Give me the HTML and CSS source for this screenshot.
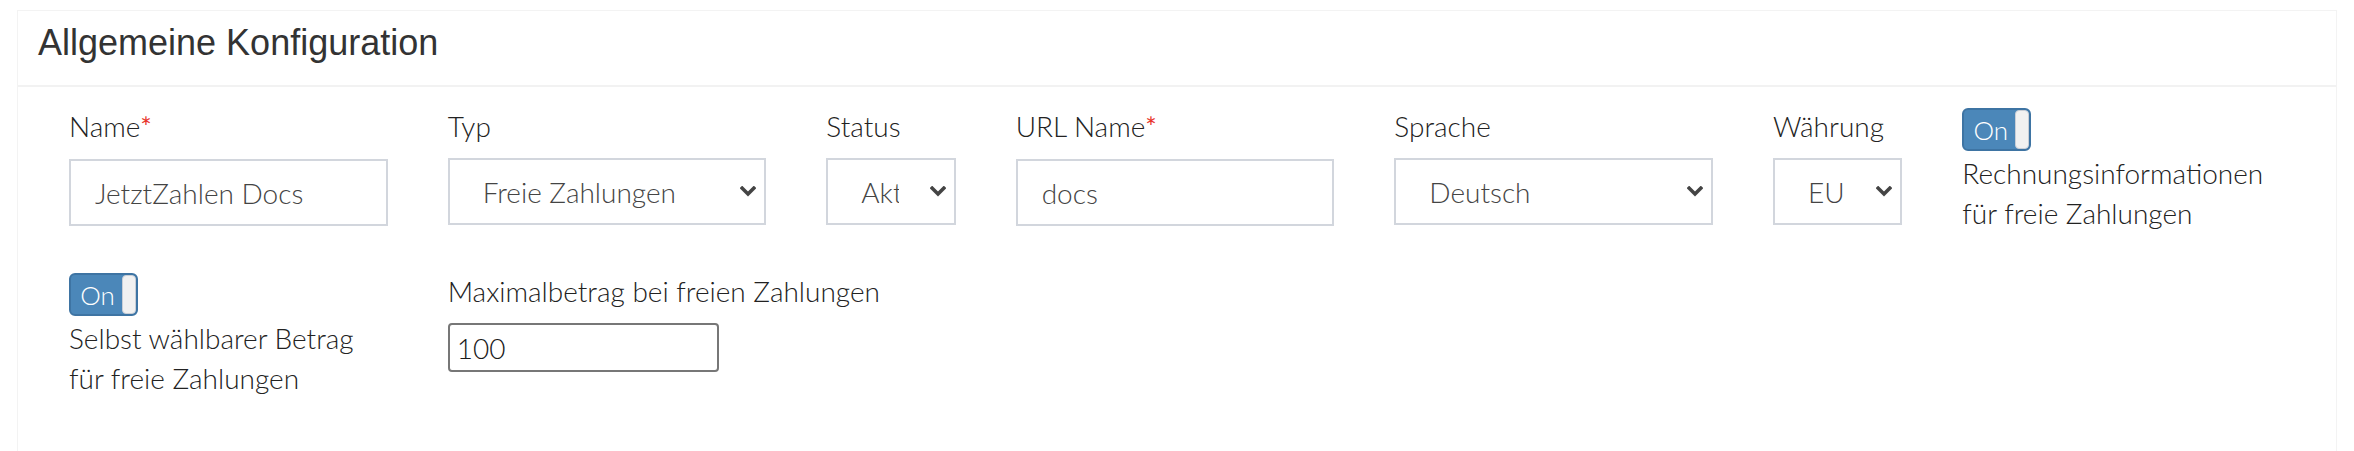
FILE: index.html
```html
<!DOCTYPE html>
<html lang="de">
<head>
<meta charset="utf-8">
<title>Allgemeine Konfiguration</title>
<link rel="stylesheet" href="styles.css">
</head>
<body>
<div class="page">
  <section class="panel">
    <header class="panel-heading">
      <h3 class="panel-title">Allgemeine Konfiguration</h3>
    </header>
    <div class="panel-body">
      <div class="form-row">
        <div class="field span2">
          <label class="field-label">Name<span class="req">*</span></label>
          <input class="control" type="text" value="JetztZahlen Docs">
        </div>
        <div class="field span2">
          <label class="field-label">Typ</label>
          <div class="select-wrap">
            <select class="control select"><option>Freie Zahlungen</option></select>
            <svg class="chevron" viewBox="0 0 16 11" width="16" height="11"><polyline points="2.2,2.2 8,8 13.8,2.2" fill="none" stroke="#444" stroke-width="3.6" stroke-linecap="square"/></svg>
          </div>
        </div>
        <div class="field span1">
          <label class="field-label">Status</label>
          <div class="select-wrap">
            <select class="control select"><option>Aktiv</option></select>
            <svg class="chevron" viewBox="0 0 16 11" width="16" height="11"><polyline points="2.2,2.2 8,8 13.8,2.2" fill="none" stroke="#444" stroke-width="3.6" stroke-linecap="square"/></svg>
          </div>
        </div>
        <div class="field span2">
          <label class="field-label">URL Name<span class="req">*</span></label>
          <input class="control" type="text" value="docs">
        </div>
        <div class="field span2">
          <label class="field-label">Sprache</label>
          <div class="select-wrap">
            <select class="control select"><option>Deutsch</option></select>
            <svg class="chevron" viewBox="0 0 16 11" width="16" height="11"><polyline points="2.2,2.2 8,8 13.8,2.2" fill="none" stroke="#444" stroke-width="3.6" stroke-linecap="square"/></svg>
          </div>
        </div>
        <div class="field span1">
          <label class="field-label">Währung</label>
          <div class="select-wrap">
            <select class="control select"><option>EUR</option></select>
            <svg class="chevron" viewBox="0 0 16 11" width="16" height="11"><polyline points="2.2,2.2 8,8 13.8,2.2" fill="none" stroke="#444" stroke-width="3.6" stroke-linecap="square"/></svg>
          </div>
        </div>
        <div class="field span2">
          <span class="toggle"><span class="toggle-on">On</span><span class="toggle-handle"></span></span>
          <span class="toggle-label">Rechnungsinformationen<br>für freie Zahlungen</span>
        </div>
      </div>
      <div class="form-row">
        <div class="field span2">
          <span class="toggle"><span class="toggle-on">On</span><span class="toggle-handle"></span></span>
          <span class="toggle-label">Selbst wählbarer Betrag<br>für freie Zahlungen</span>
        </div>
        <div class="field span2">
          <label class="field-label nowrap">Maximalbetrag bei freien Zahlungen</label>
          <input class="plain-input" type="text" value="100">
        </div>
      </div>
    </div>
  </section>
</div>
</body>
</html>
```

FILE: styles.css
```css
html, body {
  margin: 0;
  padding: 0;
  background: #ffffff;
}

.page {
  padding: 10px 17px 0;
}

.panel {
  border: 1px solid #f3f3f3;
  border-bottom: none;
  background: #ffffff;
}

.panel-heading {
  box-sizing: border-box;
  height: 76px;
  padding: 14px 20px 0;
  border-bottom: 2px solid #f2f2f2;
}

.panel-title {
  margin: 0;
  font-family: "Liberation Sans", Arial, sans-serif;
  font-weight: 400;
  font-size: 36px;
  line-height: 36px;
  color: #333333;
}

.panel-body {
  padding: 21px 55px 90px 51px;
  font-family: Lato, "Noto Sans", sans-serif;
  font-weight: 300;
  font-size: 28px;
  color: #222222;
}

.form-row {
  display: grid;
  grid-template-columns: repeat(12, minmax(0, 1fr));
  column-gap: 60px;
  align-items: start;
}

.form-row + .form-row {
  margin-top: 40px;
}

.span1 { grid-column: span 1; }
.span2 { grid-column: span 2; }

.field {
  display: flex;
  flex-direction: column;
  align-items: flex-start;
  min-width: 0;
}

.field-label {
  display: block;
  line-height: 36px;
  margin-bottom: 14px;
  color: #222222;
}

.nowrap {
  white-space: nowrap;
}

.req {
  color: #e8352b;
  font-weight: 400;
  font-size: 27px;
}

.control {
  box-sizing: border-box;
  width: 100%;
  height: 67px;
  margin: 0;
  padding: 0 24px;
  border: 2px solid #d2d6dd;
  border-radius: 0;
  background: #ffffff;
  font-family: Lato, "Noto Sans", sans-serif;
  font-weight: 300;
  font-size: 28px;
  color: #444444;
  outline: none;
}

.select-wrap {
  position: relative;
  width: 100%;
}

.select {
  -webkit-appearance: none;
  appearance: none;
  padding: 0 55px 0 33px;
  display: block;
}

.chevron {
  position: absolute;
  right: 10px;
  top: 28px;
  pointer-events: none;
}

.toggle {
  box-sizing: border-box;
  display: flex;
  width: 69px;
  height: 43px;
  margin-bottom: 2px;
  border: 2px solid #3e74a3;
  border-radius: 6px;
  background: #4b87b9;
  overflow: hidden;
}

.toggle-on {
  flex: 1;
  display: flex;
  align-items: center;
  justify-content: center;
  color: #ffffff;
  font-size: 26px;
  line-height: 1;
  padding-left: 2px;
}

.toggle-handle {
  box-sizing: border-box;
  width: 14px;
  height: 100%;
  background: #f1f1f1;
  border: 1px solid #c9ced6;
  border-radius: 4px;
}

.toggle-label {
  display: block;
  line-height: 40px;
  color: #222222;
  white-space: nowrap;
}

.plain-input {
  box-sizing: border-box;
  width: 271px;
  height: 49px;
  margin: 0;
  padding: 0 7px;
  border: 2px solid #777777;
  border-radius: 4px;
  background: #ffffff;
  font-family: Lato, "Noto Sans", sans-serif;
  font-weight: 300;
  font-size: 28px;
  color: #1a1a1a;
  outline: none;
}
```
